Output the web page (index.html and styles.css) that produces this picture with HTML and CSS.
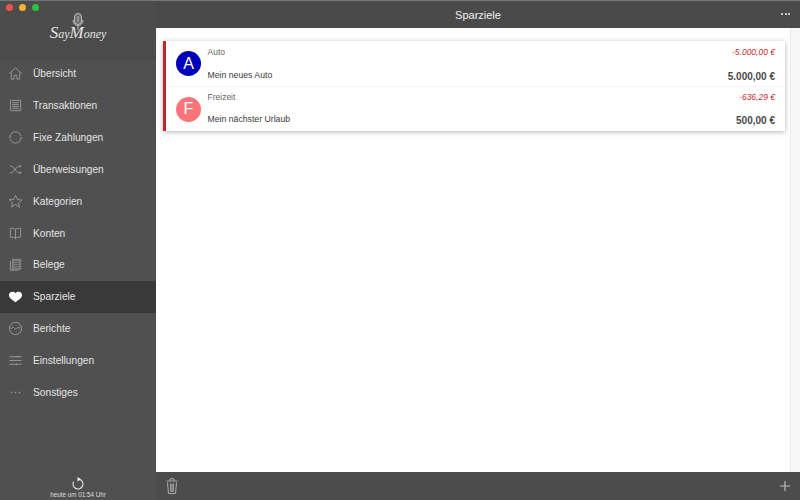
FILE: index.html
```html
<!DOCTYPE html>
<html lang="de">
  <head>
    <meta charset="UTF-8" />
    <title>Sparziele</title>
    <link rel="stylesheet" href="styles.css">
  </head>
  <body>
    <div class="app">
      <aside class="sidebar">
        <div class="logoArea">
          <div class="traffic">
            <span class="dot red"></span>
            <span class="dot yellow"></span>
            <span class="dot green"></span>
          </div>
          <svg class="mic" width="12" height="17" viewBox="0 0 12 17" fill="none" stroke="#bbb">
            <rect x="2.500" y="0.500" width="7" height="11" rx="3.500" fill="#6a6a6a"/>
            <path d="M1 7c0 3.300 2.200 5.500 5 5.500s5-2.200 5-5.500M6 12.500V17M6 3v6" />
          </svg>
          <div class="logoText"><span class="logoCap">S</span>ay<span class="logoCap">M</span>oney</div>
        </div>
        <nav class="nav">
          <a class="navItem">
            <svg class="icon" viewBox="0 0 16 16"><path d="M1.500 8 8 2l6.500 6M3.500 7v7h3v-4h3v4h3V7"/></svg>
            Übersicht
          </a>
          <a class="navItem">
            <svg class="icon" viewBox="0 0 16 16"><path d="M2.500 2.500h11v11h-11zM4.500 5h7M4.500 7h7M4.500 9h7M4.500 11h7"/></svg>
            Transaktionen
          </a>
          <a class="navItem">
            <svg class="icon" viewBox="0 0 16 16"><path d="M2.200 6.500a6 6 0 0 1 11.600 0M13.800 9.500a6 6 0 0 1-11.600 0M.8 7.500h2.800M12.400 8.500h2.800"/></svg>
            Fixe Zahlungen
          </a>
          <a class="navItem">
            <svg class="icon" viewBox="0 0 16 16"><path d="M2 4.500h2.500l6 7H14M2 11.500h2.500l6-7H14M12.500 3 14 4.500 12.500 6M12.500 10l1.500 1.500-1.500 1.500"/></svg>
            Überweisungen
          </a>
          <a class="navItem">
            <svg class="icon" viewBox="0 0 16 16"><path d="m8 1.500 2 4.400 4.700.5-3.500 3.100 1 4.700L8 11.300l-4.200 2.400 1-4.700-3.500-3.100L6 5.900z"/></svg>
            Kategorien
          </a>
          <a class="navItem">
            <svg class="icon" viewBox="0 0 16 16"><path d="M8 3.500C6.500 2.500 4.500 2.200 2.500 2.500V12c2-.3 4 0 5.500 1 1.500-1 3.500-1.300 5.500-1V2.500c-2-.3-4 0-5.500 1zM8 3.500V14"/></svg>
            Konten
          </a>
          <a class="navItem">
            <svg class="icon" viewBox="0 0 16 16"><path class="filled" d="M4 2h10v11.500H4z"/><path d="M2.500 4.500V14h9" /><path class="docLines" d="M6 5h6M6 7h6M6 9h6M6 11h6"/></svg>
            Belege
          </a>
          <a class="navItem active">
            <svg class="icon" viewBox="0 0 16 16"><path class="heart" d="M8 14C4 11.500 1 9.500 1 6.500 1 4.500 2.500 3 4.700 3 6.100 3 7.300 3.600 8 4.500 8.700 3.600 9.900 3 11.300 3 13.500 3 15 4.500 15 6.500c0 3-3 5-7 7.500z"/></svg>
            Sparziele
          </a>
          <a class="navItem">
            <svg class="icon" viewBox="0 0 16 16"><circle cx="8" cy="8" r="6.500"/><path d="M3 8.500c1-2 2-2.500 3-1.500s1.500 2 2.500 1.500S10 6 13 7.500"/></svg>
            Berichte
          </a>
          <a class="navItem">
            <svg class="icon" viewBox="0 0 16 16"><path d="M1.500 4h13M1.500 8h13M1.500 12h13M10.500 3v2M5 7v2M9 11v2"/></svg>
            Einstellungen
          </a>
          <a class="navItem">
            <svg class="icon" viewBox="0 0 16 16"><path class="dots" d="M3 8h1.500M7.250 8h1.500M11.500 8H13"/></svg>
            Sonstiges
          </a>
        </nav>
        <div class="sync">
          <svg class="syncIcon" width="14" height="14" viewBox="0 0 14 14" fill="none" stroke="#ddd" stroke-width="1.200">
            <path d="M8 2.100A5 5 0 1 1 2.600 4.600"/>
            <path d="M6.500 0 10 2.200 6.500 4.500z" fill="#eee" stroke="none"/>
          </svg>
          <div>heute um 01:54 Uhr</div>
        </div>
      </aside>
      <main class="main">
        <header class="topBar">
          <span>Sparziele</span>
          <span class="moreDots"><i></i><i></i><i></i></span>
        </header>
        <div class="content">
          <div class="list">
            <div class="card">
              <div class="goal">
                <div class="avatar blue">A</div>
                <div class="goalText">
                  <div class="goalLine">
                    <span class="category">Auto</span>
                    <span class="remaining">-5.000,00 €</span>
                  </div>
                  <div class="goalLine">
                    <span class="goalName">Mein neues Auto</span>
                    <span class="amount">5.000,00 €</span>
                  </div>
                </div>
              </div>
              <div class="goal">
                <div class="avatar pink">F</div>
                <div class="goalText">
                  <div class="goalLine">
                    <span class="category">Freizeit</span>
                    <span class="remaining">-636,29 €</span>
                  </div>
                  <div class="goalLine">
                    <span class="goalName">Mein nächster Urlaub</span>
                    <span class="amount">500,00 €</span>
                  </div>
                </div>
              </div>
            </div>
          </div>
          <div class="scrollTrack"></div>
        </div>
        <footer class="bottomBar">
          <svg width="12" height="16" viewBox="0 0 12 16" fill="none" stroke="#aaa">
            <path d="M.5 3h11M4 2.500V.8h4v1.700M1.500 4.500l1 11h7l1-11M4.500 5.500l.3 8.500M7.500 5.500l-.3 8.500M6 5.500V14"/>
          </svg>
          <svg width="10" height="10" viewBox="0 0 10 10" stroke="#bbb" stroke-width="1.200">
            <path d="M5 0v10M0 5h10"/>
          </svg>
        </footer>
      </main>
    </div>
  </body>
</html>
```

FILE: styles.css
```css
* {
  box-sizing: border-box;
}
html,
body {
  margin: 0;
  height: 100%;
  overflow: hidden;
}
body {
  font-family: "Liberation Sans", Arial, sans-serif;
  background-color: #4e4e4e;
}
.app {
  display: flex;
  width: 800px;
  height: 500px;
}

/* sidebar */
.sidebar {
  width: 156px;
  display: flex;
  flex-direction: column;
  background-color: #505050;
  color: #e6e6e6;
  border-top: 1px solid #777;
}
.logoArea {
  position: relative;
  height: 56.900px;
  display: flex;
  flex-direction: column;
  align-items: center;
  padding-top: 12px;
  background-color: #4c4c4c;
  box-shadow: 0 1px 2px rgba(0, 0, 0, 0.15);
}
.traffic {
  position: absolute;
  top: 3px;
  left: 6px;
  display: flex;
  gap: 6px;
}
.dot {
  width: 7px;
  height: 7px;
  border-radius: 50%;
}
.dot.red {
  background-color: #f4524d;
}
.dot.yellow {
  background-color: #f5b32f;
}
.dot.green {
  background-color: #2bc33f;
}
.mic {
  display: block;
}
.logoText {
  margin-top: -7px;
  font-family: "Liberation Serif", serif;
  font-style: italic;
  font-size: 12px;
  color: #e4e4e4;
}
.logoCap {
  font-size: 17px;
}
.nav {
  display: flex;
  flex-direction: column;
}
.navItem {
  height: 31.850px;
  display: flex;
  align-items: center;
  gap: 10px;
  padding-left: 8px;
  font-size: 10.200px;
  color: #e4e4e4;
}
.navItem.active {
  background-color: #393939;
}
.icon {
  width: 15px;
  height: 15px;
  fill: none;
  stroke: #999;
  stroke-width: 1;
}
.icon .filled {
  fill: #808080;
  stroke: none;
}
.icon .docLines {
  stroke: #555;
}
.icon .heart {
  fill: #fff;
  stroke: none;
}
.icon .dots {
  stroke-width: 1.500;
}
.sync {
  margin-top: auto;
  height: 24px;
  display: flex;
  flex-direction: column;
  align-items: center;
  padding-top: 1px;
  font-size: 6.300px;
  color: #ddd;
}
.syncIcon {
  display: block;
  flex-shrink: 0;
}

/* main column */
.main {
  flex: 1;
  display: flex;
  flex-direction: column;
  min-width: 0;
}
.topBar {
  position: relative;
  height: 28px;
  display: flex;
  align-items: center;
  justify-content: center;
  background-color: #4a4a4a;
  color: #f0f0f0;
  font-size: 11px;
  border-top: 1px solid #777;
}
.moreDots {
  position: absolute;
  right: 10px;
  top: 12px;
  display: flex;
  gap: 1.500px;
}
.moreDots i {
  width: 2px;
  height: 2px;
  background-color: #eee;
  border-radius: 50%;
}
.content {
  flex: 1;
  display: flex;
  background-color: #fff;
  min-height: 0;
}
.list {
  flex: 1;
  padding: 13px 5px 0 7px;
}
.scrollTrack {
  width: 10px;
  background-color: #f6f6f6;
  border-left: 1px solid #ececec;
}
.card {
  background-color: #fff;
  border-left: 3px solid #c4242b;
  box-shadow: 0 1px 5px rgba(0, 0, 0, 0.3);
}
.goal {
  height: 45px;
  display: flex;
  align-items: center;
  padding: 0 10px;
}
.goal + .goal {
  border-top: 1px solid #f4f4f4;
}
.avatar {
  width: 25px;
  height: 25px;
  flex-shrink: 0;
  border-radius: 50%;
  display: flex;
  align-items: center;
  justify-content: center;
  color: #fff;
  font-size: 16px;
  margin-right: 6.500px;
}
.avatar.blue {
  background-color: #0000b8;
}
.avatar.pink {
  background-color: #fb7478;
}
.goalText {
  flex: 1;
  height: 100%;
  display: flex;
  flex-direction: column;
  justify-content: space-between;
  padding: 6px 0 4px;
}
.goal + .goal .goalText {
  padding: 5px 0 5px;
}
.goalLine {
  display: flex;
  justify-content: space-between;
  align-items: center;
}
.category {
  font-size: 8.500px;
  color: #666;
}
.remaining {
  font-size: 8.500px;
  font-style: italic;
  color: #c92a2a;
}
.goalName {
  margin-bottom: 2px;
  font-size: 8.700px;
  color: #3a3a3a;
}
.amount {
  font-size: 10px;
  font-weight: bold;
  color: #4a4a4a;
}
.bottomBar {
  height: 28px;
  display: flex;
  align-items: center;
  justify-content: space-between;
  padding: 0 10px;
  background-color: #4c4c4c;
}
```
